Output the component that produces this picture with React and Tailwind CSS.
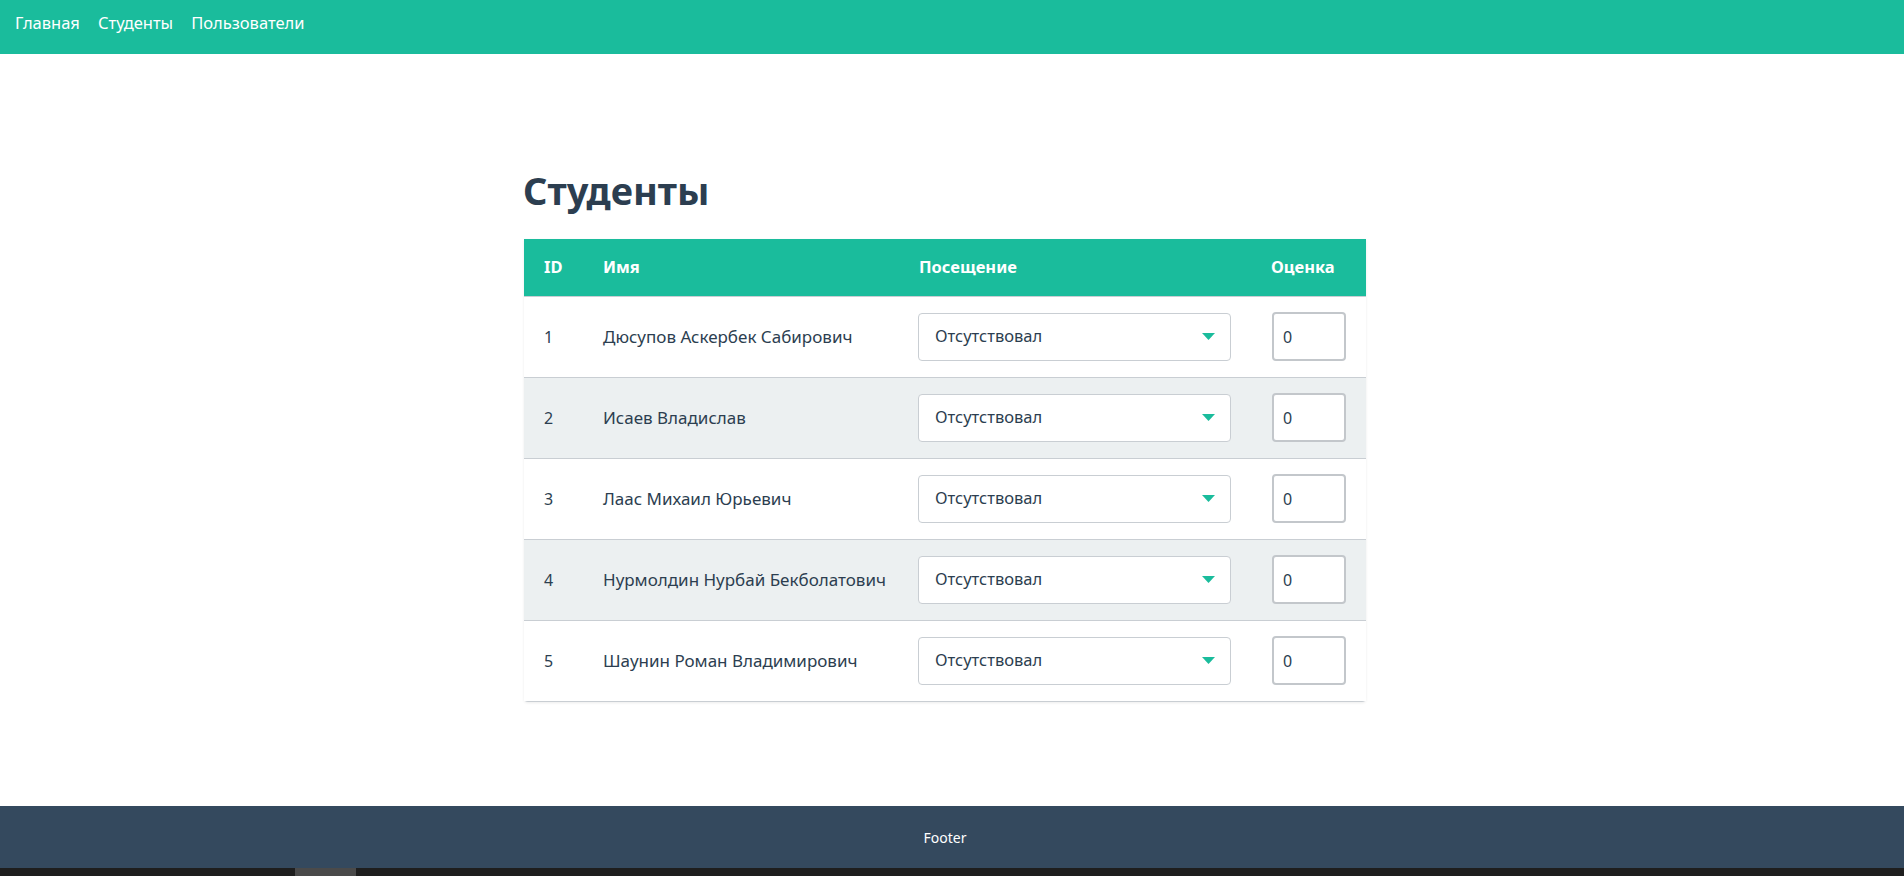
import React from "react";

const students = [
  [1, "Дюсупов Аскербек Сабирович"],
  [2, "Исаев Владислав"],
  [3, "Лаас Михаил Юрьевич"],
  [4, "Нурмолдин Нурбай Бекболатович"],
  [5, "Шаунин Роман Владимирович"],
];

function Row({ id, name, striped }) {
  return (
    <div
      className={`grid grid-cols-[59px_316px_352px_115px] h-[81px] items-center border-t border-[#c9ced3] ${
        striped ? "bg-[#ecf0f1]" : "bg-white"
      }`}
    >
      <div className="pl-5 text-[16px]">{id}</div>
      <div className="pl-5 whitespace-nowrap text-[17px]">{name}</div>
      <div className="pl-5 pr-5">
        <div className="h-12 w-[313px] -ml-px -mt-px rounded-[4px] border border-[#c9ced3] bg-white flex items-center justify-between pl-4 pr-[15px] text-[16.5px]">
          <span>Отсутствовал</span>
          <svg width="13" height="7" viewBox="0 0 13 7">
            <path d="M0 0 L13 0 L6.5 7 Z" fill="#1abc9c" />
          </svg>
        </div>
      </div>
      <div className="pl-5 pr-5">
        <div className="h-[49px] w-[74px] ml-px -mt-px rounded-[4px] border-2 border-[#c3c7cb] bg-white flex items-center pl-[9px] text-[16px]">
          0
        </div>
      </div>
    </div>
  );
}

export default function App() {
  return (
    <div
      className="h-[876px] flex flex-col text-[#2c3e50] overflow-hidden"
      style={{ fontFamily: '"Noto Sans", "Open Sans", sans-serif' }}
    >
      <nav className="h-[54px] shrink-0 bg-[#1abc9c] flex items-center pl-[15px] gap-[18px] text-white text-[16.5px] pb-2">
        <span>Главная</span>
        <span>Студенты</span>
        <span>Пользователи</span>
      </nav>
      <main className="flex-1 pr-[14px]">
        <div className="w-[842px] mx-auto pt-[112px]">
          <h1 className="text-[38px] font-bold leading-[48px] text-[#2c3e50] -ml-px">Студенты</h1>
          <div className="mt-[25px] rounded-b-[4px] shadow-[0_1px_3px_rgba(0,0,0,0.08)] border-b border-[#c9ced3]">
            <div className="grid grid-cols-[59px_316px_352px_115px] h-[57px] items-center bg-[#1abc9c] text-white font-bold text-[16.5px]">
              <div className="pl-5">ID</div>
              <div className="pl-5">Имя</div>
              <div className="pl-5">Посещение</div>
              <div className="pl-5">Оценка</div>
            </div>
            {students.map(([id, name], i) => (
              <Row key={id} id={id} name={name} striped={i % 2 === 1} />
            ))}
          </div>
        </div>
      </main>
      <footer className="h-[62px] shrink-0 bg-[#34495e] flex items-center justify-center text-white text-[14px] pr-[14px]">
        Footer
      </footer>
      <div className="h-2 shrink-0 bg-[#1e1e1e] flex">
        <div className="ml-[295px] w-[61px] bg-[#4a4a4a]" />
      </div>
    </div>
  );
}
